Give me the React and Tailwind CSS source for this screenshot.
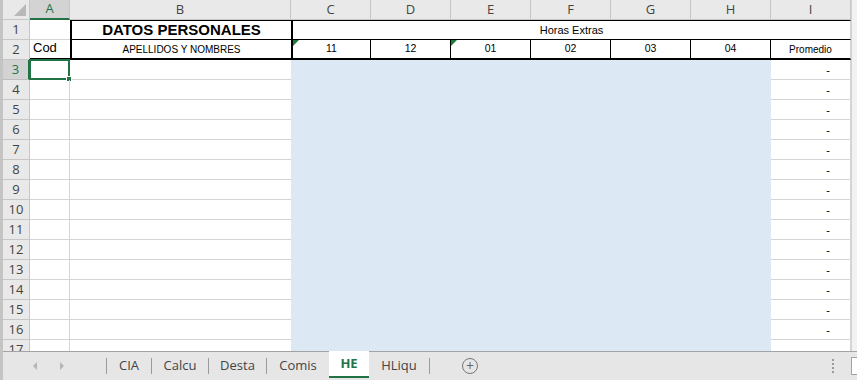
const gray = 'border-[#d4d4d4]';

function RowHead({ n, active }) {
  return (
    <div
      className={
        'w-[27px] shrink-0 flex items-center justify-center text-[13px] font-["Open_Sans",sans-serif] border-b border-r ' +
        (active
          ? 'bg-[#d3d3d3] text-[#217346] border-b-[#bdbdbd] border-r-2 border-r-[#217346]'
          : 'bg-[#e9e9e9] text-[#444] border-[#c6c6c6]')
      }
    >
      {n}
    </div>
  );
}

function Tri() {
  return (
    <div className="absolute left-0 top-0 w-0 h-0 border-t-[6px] border-t-[#1e7a3c] border-r-[6px] border-r-transparent" />
  );
}

function DataRow({ n }) {
  const sel = n === 3;
  return (
    <div className="flex h-[20px] shrink-0">
      <RowHead n={n} active={sel} />
      <div className={'w-[40px] shrink-0 border-r border-b relative ' + gray}>
        {sel && (
          <div className="absolute -left-px -top-px w-[41px] h-[21px] border-2 border-[#217346]">
            <div className="absolute -right-[4px] -bottom-[4px] w-[6px] h-[6px] bg-[#217346] border border-white" />
          </div>
        )}
      </div>
      <div className={'w-[221px] shrink-0 border-b ' + gray} />
      <div className="w-[480px] shrink-0 bg-[#dce9f5]" />
      <div className={'w-[80px] shrink-0 border-r border-b flex items-end justify-end pr-[20px] pb-[1px] text-[11px] text-black ' + gray}>
        -
      </div>
    </div>
  );
}

export default function App() {
  const cols = ['C', 'D', 'E', 'F', 'G', 'H'];
  const months = ['11', '12', '01', '02', '03', '04'];
  const rows = [];
  for (let i = 3; i <= 17; i++) rows.push(i);

  return (
    <div className="w-[857px] h-[380px] flex bg-white overflow-hidden font-['Liberation_Sans',Arial,sans-serif]">
      <div className="w-[3px] shrink-0 bg-[#c4c4c4]" />
      <div className="flex-1 flex flex-col min-w-0">
        <div className="h-[351px] flex overflow-hidden shrink-0">
          <div className="w-[848px] shrink-0 flex flex-col">
            {/* column headers */}
            <div className="flex h-[20px] shrink-0 bg-[#e9e9e9] text-[13px] text-[#444] font-['Open_Sans',sans-serif]">
              <div className="w-[27px] shrink-0 border-r border-b border-[#c6c6c6] relative">
                <div className="absolute right-[3px] bottom-[3px] w-0 h-0 border-l-[12px] border-l-transparent border-b-[12px] border-b-[#b8b8b8]" />
              </div>
              <div className="w-[40px] shrink-0 bg-[#d3d3d3] text-[#217346] border-r border-[#c6c6c6] border-b-2 border-b-[#217346] flex items-center justify-center">
                A
              </div>
              <div className="w-[221px] shrink-0 border-r border-b border-[#c6c6c6] flex items-center justify-center">B</div>
              {cols.map((c) => (
                <div key={c} className="w-[80px] shrink-0 border-r border-b border-[#c6c6c6] flex items-center justify-center">
                  {c}
                </div>
              ))}
              <div className="w-[80px] shrink-0 border-r border-b border-[#c6c6c6] flex items-center justify-center">I</div>
            </div>

            {/* row 1 */}
            <div className="flex h-[20px] shrink-0">
              <RowHead n={1} />
              <div className={'w-[40px] shrink-0 border-b ' + gray} />
              <div className="w-[221px] shrink-0 border-l-2 border-l-black border-t border-b border-black flex items-center justify-center text-[15px] font-bold text-black">
                DATOS PERSONALES
              </div>
              <div className="w-[560px] shrink-0 border-l-2 border-l-black border-t border-b border-black border-r border-r-[#d4d4d4] flex items-center justify-center text-[11px] text-black">
                Horas Extras
              </div>
            </div>

            {/* row 2 */}
            <div className="flex h-[20px] shrink-0">
              <RowHead n={2} />
              <div className="w-[40px] shrink-0 border-b-2 border-black flex items-end pl-[3px] pb-[1px] text-[13px] text-black">
                Cod
              </div>
              <div className="w-[221px] shrink-0 border-l-2 border-black border-b-2 flex items-center justify-center text-[10px] text-black">
                APELLIDOS Y NOMBRES
              </div>
              {months.map((m, i) => (
                <div
                  key={m}
                  className={
                    'w-[80px] shrink-0 relative border-r border-b-2 border-black flex items-end justify-center pb-[1px] text-[10.5px] text-black ' +
                    (i === 0 ? 'border-l-2' : '')
                  }
                >
                  {(i === 0 || i === 2) && <Tri />}
                  {m}
                </div>
              ))}
              <div className="w-[80px] shrink-0 border-b-2 border-black border-r border-r-[#d4d4d4] flex items-end justify-center pb-[1px] text-[10px] text-black">
                Promedio
              </div>
            </div>

            {rows.map((n) => (
              <DataRow key={n} n={n} />
            ))}
          </div>
          <div className="flex-1 bg-[#f2f2f2] border-l border-[#d4d4d4]" />
        </div>

        {/* sheet tabs */}
        <div className="flex-1 flex items-stretch bg-[#e6e6e6] border-t border-[#a3a3a3] text-[13px] text-[#444] font-['Open_Sans',sans-serif]">
          <div className="w-[103px] shrink-0 flex items-center">
            <span className="ml-[30px] w-0 h-0 border-y-[4px] border-y-transparent border-r-[4px] border-r-[#b5b5b5]" />
            <span className="ml-[23px] w-0 h-0 border-y-[4px] border-y-transparent border-l-[4px] border-l-[#b5b5b5]" />
          </div>
          <div className="w-px my-[6px] bg-[#9a9a9a]" />
          {[
            ['CIA', 'w-[44px]'],
            ['Calcu', 'w-[56px]'],
            ['Desta', 'w-[57px]'],
          ].map(([t, w]) => (
            <div key={t} className="flex">
              <div className={w + ' flex items-center justify-center'}>{t}</div>
              <div className="w-px my-[6px] bg-[#9a9a9a]" />
            </div>
          ))}
          <div className="w-[62px] flex items-center justify-center">Comis</div>
          <div className="w-[40px] bg-white flex items-center justify-center font-bold text-[#217346] border-b-2 border-[#217346] mb-[2px] -mt-px">
            HE
          </div>
          <div className="w-[60px] flex items-center justify-center">HLiqu</div>
          <div className="w-px my-[6px] bg-[#9a9a9a]" />
          <div className="w-[80px] flex items-center justify-center">
            <span className="w-[16px] h-[16px] rounded-full border border-[#777] flex items-center justify-center text-[#666] text-[14px] leading-none">
              +
            </span>
          </div>
          <div className="flex-1" />
          <div className="w-[20px] flex flex-col items-center justify-center gap-[2px]">
            <span className="w-[2px] h-[2px] bg-[#9a9a9a]" />
            <span className="w-[2px] h-[2px] bg-[#9a9a9a]" />
            <span className="w-[2px] h-[2px] bg-[#9a9a9a]" />
            <span className="w-[2px] h-[2px] bg-[#9a9a9a]" />
          </div>
          <div className="w-[6px] ml-[8px] my-[5px] bg-white border border-r-0 border-[#a3a3a3]" />
        </div>
      </div>
    </div>
  );
}
